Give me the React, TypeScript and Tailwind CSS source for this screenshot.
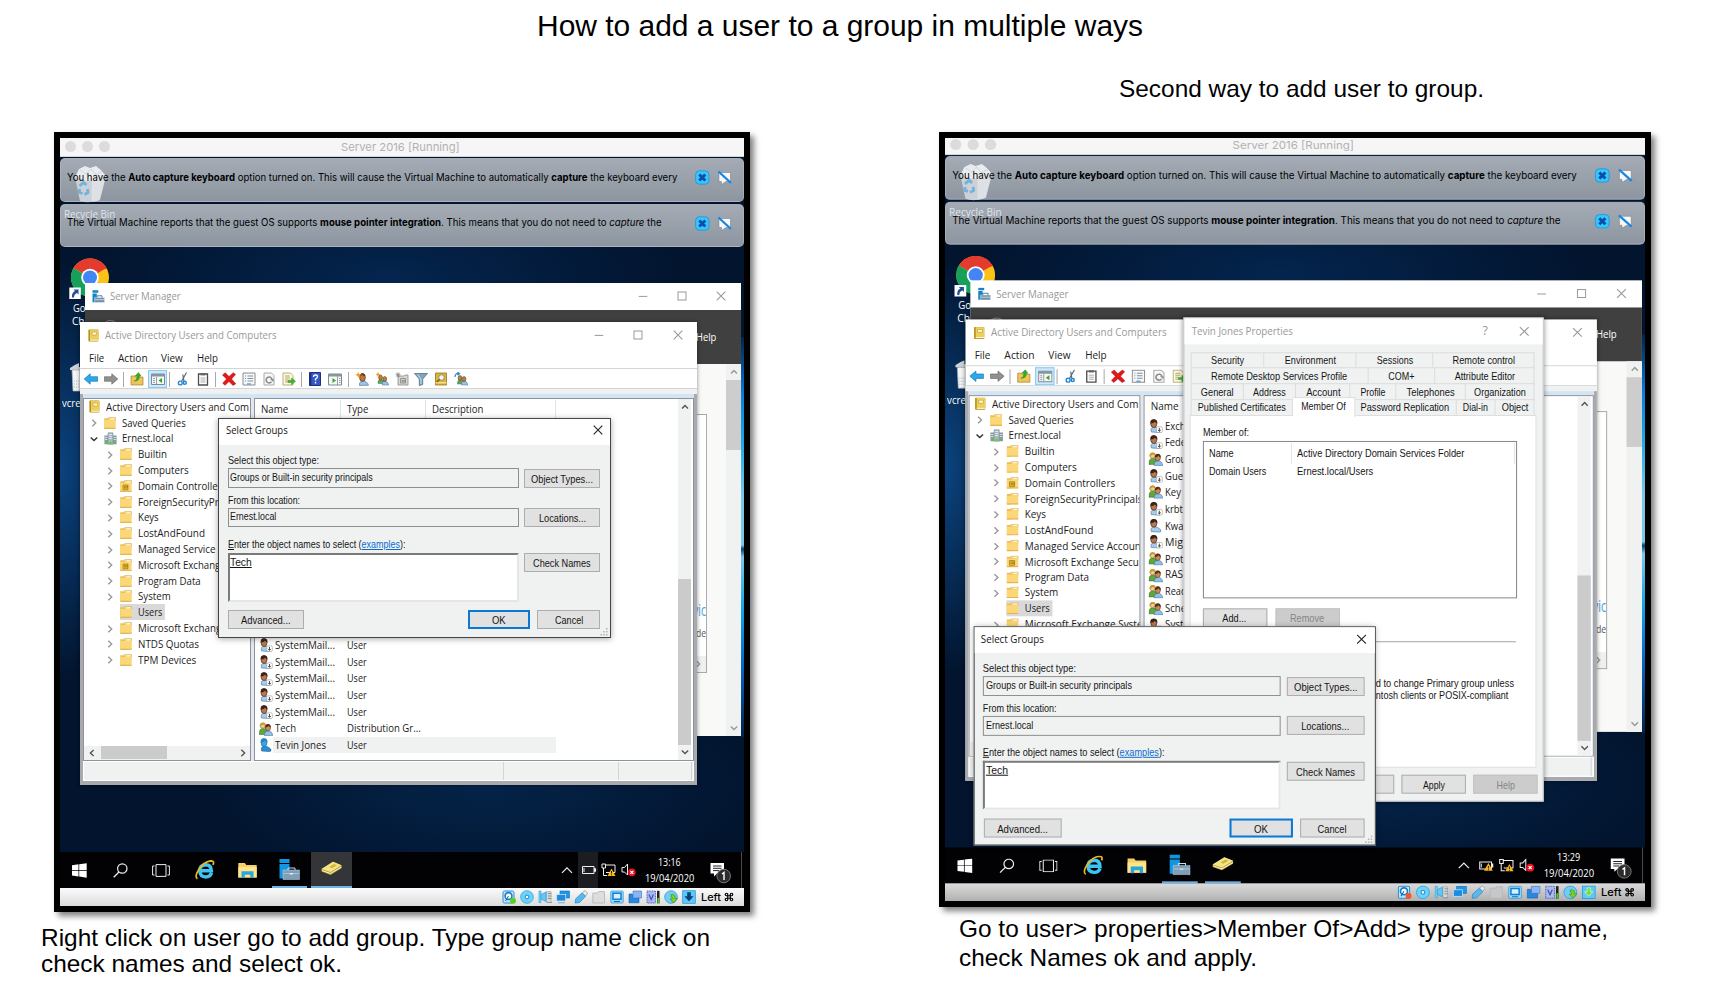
import { useLayoutEffect, useRef, type ReactNode } from "react";

/* Squeezes or stretches one line of text to the width given by its class. */
function Fit({ className = "", children }: { className?: string; children: ReactNode }) {
  const outer = useRef<HTMLSpanElement>(null);
  const inner = useRef<HTMLSpanElement>(null);
  useLayoutEffect(() => {
    const o = outer.current;
    const i = inner.current;
    if (!o || !i) return;
    i.style.transform = "none";
    const ratio = o.getBoundingClientRect().width / i.getBoundingClientRect().width;
    i.style.transform = `scaleX(${ratio})`;
  }, [children]);
  return (
    <span ref={outer} className={`block shrink-0 whitespace-nowrap ${className}`}>
      <span ref={inner} className="inline-block origin-left whitespace-nowrap">
        {children}
      </span>
    </span>
  );
}

const segoe = "font-['Open_Sans','Noto_Sans',sans-serif] text-[10.5px] leading-[14px]";
const shell = "font-['Liberation_Sans',Arial,sans-serif] text-[10.5px] leading-[14px]";

/* ---------- window glyphs ---------- */
const MinGlyph = () => (
  <svg className="h-[10px] w-[10px]" viewBox="0 0 10 10"><path d="M.7 5.4h8.6" stroke="#999" strokeWidth="1" /></svg>
);
const MaxGlyph = () => (
  <svg className="h-[10px] w-[10px]" viewBox="0 0 10 10"><rect x="1" y="1" width="8" height="8" fill="none" stroke="#999" /></svg>
);
const CloseGlyph = ({ dark = false }: { dark?: boolean }) => (
  <svg className="h-[10px] w-[10px]" viewBox="0 0 10 10"><path d="M.7.7l8.6 8.6M9.3.7L.7 9.3" stroke={dark ? "#222" : "#999"} strokeWidth="1.1" /></svg>
);
function Chevron({ d, color = "#555" }: { d: "up" | "down" | "left" | "right"; color?: string }) {
  const p = {
    up: "M1 5.6L4 2.4l3 3.2",
    down: "M.8 2.4L4 5.6l3.2-3.2",
    left: "M5.6 1L2.4 4l3.2 3",
    right: "M2.3.7L5.7 4 2.3 7.3",
  }[d];
  return <svg className="h-[8px] w-[8px]" viewBox="0 0 8 8"><path d={p} fill="none" stroke={color} strokeWidth="1.4" /></svg>;
}

/* ---------- small icons ---------- */
const BookIcon = () => (
  <svg className="h-[13px] w-[11px]" viewBox="0 0 11 13">
    <rect x=".4" y=".6" width="10" height="12" rx=".8" fill="#b98f1c" />
    <rect x="2" y=".8" width="8.4" height="9.6" fill="#ecd05c" />
    <rect x="2" y="10.4" width="8.4" height="1.4" fill="#fff5cf" />
    <rect x="4" y="3" width="4.6" height="3" fill="#fdf6cc" stroke="#b78d1a" strokeWidth=".5" />
  </svg>
);
const ServerIcon = () => (
  <svg className="h-[13px] w-[13px]" viewBox="0 0 13 13">
    <path d="M.5.3h5.8v2.5H.5zM.5 3.6h4.3v8.6H.5z" fill="#1583c9" />
    <path d="M2.6 7.5h10v5h-10z" fill="#6d93ac" stroke="#fff" strokeWidth=".4" />
    <path d="M5 7.5V5.8h5v1.7" fill="none" stroke="#5c8199" />
    <path d="M3 9.700h9.500" stroke="#e5eef3" strokeWidth=".7" />
  </svg>
);
const FolderIcon = ({ ou = false }: { ou?: boolean }) => (
  <svg className="h-[12px] w-[12px] shrink-0" viewBox="0 0 12 12">
    <path d="M.3 1.300h3.700l1 1.200V11.700H.3z" fill="#eebd53" />
    <path d="M4.500.5h7v3h-7z" fill="#f8dc8d" stroke="#d8a73f" strokeWidth=".5" />
    <path d="M.3 3h11.400v8.700H.3z" fill="#fbd778" />
    <path d="M.3 10.800h11.400v.9H.3z" fill="#dfa63f" />
    <path d="M7 1.800h3.300" stroke="#fff" strokeWidth=".8" />
    {ou && <path d="M3 5h5v4.800H3zM4.500 6.500h3v1.500h-3z" fill="#e8c030" stroke="#9b7410" strokeWidth=".7" />}
  </svg>
);
const DomainIcon = () => (
  <svg className="h-[13px] w-[13px] shrink-0" viewBox="0 0 13 13">
    <path d="M.4 3.500h3.800v8.800H.4zM8.800 3.500h3.800v8.800H8.800z" fill="#8b9aa5" />
    <path d="M4 .8h5v11.500H4z" fill="#a9b7c0" stroke="#73838f" strokeWidth=".5" />
    <path d="M4.800 2.500h3.400M4.800 4.500h3.400M4.800 6.500h3.400M1 5.500h2.500M1 7.500h2.500M9.500 5.500h2.500M9.500 7.500h2.500" stroke="#f2f6f8" strokeWidth=".7" />
    <path d="M1.500 10.500h2M5.500 11h2M9.800 10.500h2" stroke="#48d31d" strokeWidth="1.800" />
  </svg>
);
type Kind = "off" | "user" | "group" | "blue";
function PersonIcon({ kind }: { kind: Kind }) {
  if (kind === "group")
    return (
      <svg className="h-[14px] w-[14px] shrink-0" viewBox="0 0 14 14">
        <path d="M.2 11.500Q.2 6.500 4 6.500t3.500 3.500l-.5 2.500H.2z" fill="#5ca83b" stroke="#33691e" strokeWidth=".5" />
        <circle cx="3.800" cy="3.700" r="2.600" fill="#f0cf92" stroke="#8a6a1d" strokeWidth=".6" />
        <path d="M.9 4Q1.200.6 4 .6t2.700 2.500q-2 .3-2.800-.6Q3.200 3.800.9 4z" fill="#c99c24" />
        <path d="M5.300 13.500Q5 9.300 9 9t4.800 4.600z" fill="#8fc0e8" stroke="#33648f" strokeWidth=".5" />
        <ellipse cx="8.900" cy="5.800" rx="2.600" ry="3.200" fill="#c98a5a" stroke="#4a2a18" strokeWidth=".5" />
        <path d="M6.100 5.600Q6 1.900 9 1.900t2.800 3.700q-1.500-.3-2-1.800Q8.800 5.500 6.100 5.600z" fill="#54301c" />
      </svg>
    );
  const b = kind === "blue";
  return (
    <svg className="h-[14px] w-[14px] shrink-0" viewBox="0 0 14 14">
      <path d="M2.600 13Q1.500 8.600 4.700 8.300q4.500-.5 7 2.700 1 2.200-.8 2.500z" fill={b ? "#2a8fd0" : "#a6cdec"} stroke={b ? "#135c92" : "#3f6e97"} strokeWidth=".6" />
      <ellipse cx="5" cy="4.600" rx="3" ry="3.900" fill={b ? "#3fa4df" : "#b9774b"} stroke={b ? "#1565a0" : "#3b2317"} strokeWidth=".6" />
      <path d="M1.700 4.500Q1.300.3 5 .3t3.500 4.200Q6.800 4 6 2.800 5 4.600 1.700 4.500z" fill={b ? "#2585c4" : "#3c2418"} />
      {kind === "off" && (
        <g>
          <rect x="7.600" y="7.800" width="5.800" height="5.800" rx="1.500" fill="#fff" stroke="#888" strokeWidth=".5" />
          <path d="M10.500 9v3.200M9.100 10.900l1.400 1.400 1.400-1.400" fill="none" stroke="#222" strokeWidth=".8" />
        </g>
      )}
    </svg>
  );
}

/* ---------- toolbar ---------- */
const Sep = () => <span className="h-[15px] w-px bg-[#a9a9a9]" />;
const Ico = ({ children }: { children: ReactNode }) => <svg className="h-[14px] w-[14px]" viewBox="0 0 14 14">{children}</svg>;
const Head = ({ x, y, c }: { x: number; y: number; c: string }) => (
  <g>
    <path d={`M${x - 2.5} ${y + 6}q-.5-4 2.500-4t4 4z`} fill={c} stroke="#3f6e97" strokeWidth=".5" />
    <ellipse cx={x} cy={y} rx="1.900" ry="2.500" fill="#b9803e" stroke="#4a2e16" strokeWidth=".5" />
  </g>
);
const toolbar: { w: string; el: ReactNode }[] = [
  { w: "w-[20px]", el: <Ico><path d="M.2 7l6-5.200v3h7.500v4.400H6.200v3z" fill="#2fa8ea" stroke="#1578b8" strokeWidth=".7" /></Ico> },
  { w: "w-[19.5px]", el: <Ico><path d="M13.800 7l-6-5.200v3H.3v4.400h7.500v3z" fill="#919191" stroke="#6b6b6b" strokeWidth=".7" /></Ico> },
  { w: "w-[5.5px]", el: <Sep /> },
  { w: "w-[22px]", el: <Ico><path d="M1 4h4l1 1h7v8H1z" fill="#ecc55d" stroke="#ab812a" strokeWidth=".7" /><path d="M4 9q3 0 3-5H5l3.500-3.500L11 4H9.500Q9.500 9.500 4 9z" fill="#35ac27" stroke="#1b7a12" strokeWidth=".4" /></Ico> },
  { w: "w-[19.3px] h-[18.5px] bg-[#cce8fb] border border-[#8cc9f2]", el: <Ico><path d="M.5 2h13v10.500H.5z" fill="#f4f6f7" stroke="#7f8a92" /><path d="M.5 2h13v2.500H.5z" fill="#8795a0" /><path d="M2 6.500h2M2 8.500h2M2 10.500h2M5.500 5v7" stroke="#7f8a92" strokeWidth=".8" /><path d="M11 6v5L7.500 8.500z" fill="#34a825" /></Ico> },
  { w: "w-[3.5px]", el: <Sep /> },
  { w: "w-[24px]", el: <Ico><path d="M10.500.5L5.500 9.500M6.800 2.500L8 9.500" stroke="#596b7a" strokeWidth="1.200" /><circle cx="4.300" cy="11" r="1.900" fill="none" stroke="#2585d0" strokeWidth="1.400" /><circle cx="8.800" cy="10.800" r="1.500" fill="none" stroke="#2585d0" strokeWidth="1.400" /></Ico> },
  { w: "w-[17px]", el: <Ico><path d="M2.500 2h9v11h-9z" fill="#fff" stroke="#4d4d4d" strokeWidth="1.300" /><path d="M4.500 1h5v2.400h-5z" fill="#666" /><path d="M4.500 6h5M4.500 8h5M4.500 10h5" stroke="#888" strokeWidth=".7" /></Ico> },
  { w: "w-[7px]", el: <Sep /> },
  { w: "w-[21px]", el: <Ico><path d="M.5 3l2.800-2.300L7 4.500 11.300.7l2.200 1.800L9.500 7l4.300 4.700-2.800 1.700L7 9.500 3 13.300l-2.300-2.100L4.500 7z" fill="#e51818" stroke="#9e0c0c" strokeWidth=".5" /></Ico> },
  { w: "w-[19px]", el: <Ico><path d="M1 1h12v12H1z" fill="#f7f7f7" stroke="#8c8c8c" /><path d="M3 4h1M5.500 4H11M3 6.500h1M5.500 6.500H11M3 9h1M5.500 9H11" stroke="#7d93a5" /><path d="M5 12h4" stroke="#5aa8d8" strokeWidth="1.400" /></Ico> },
  { w: "w-[21px]", el: <Ico><path d="M2 1h7.500L12 3.500V13H2z" fill="#f7f7f7" stroke="#aaa" /><path d="M9.500 9.800A3 3 0 1 1 10 7" fill="none" stroke="#868686" strokeWidth="1.500" /><path d="M8 7h3.500V10z" fill="#868686" /></Ico> },
  { w: "w-[18.5px]", el: <Ico><path d="M1 1h7.500L11 3.500V13H1z" fill="#fffbe0" stroke="#a99a55" strokeWidth=".8" /><path d="M3 4h5M3 6h5M3 8h3M3 10h3" stroke="#8a804a" strokeWidth=".7" /><path d="M6 8.200h3.500V6l4 3.300-4 3.300v-2.200H6z" fill="#45b52d" stroke="#237a12" strokeWidth=".4" /></Ico> },
  { w: "w-[6.5px]", el: <Sep /> },
  { w: "w-[20.5px]", el: <Ico><path d="M1.500.5h11v13h-11z" fill="#3558c4" stroke="#1c2f7d" /><path d="M1.500.5h1.800v13H1.500z" fill="#1c2f7d" /><path d="M5.500 5q0-2 2-2t2 1.800Q9.500 6 7.500 7v1.500M7.500 9.800v1.700" fill="none" stroke="#fff" strokeWidth="1.300" /></Ico> },
  { w: "w-[19.5px]", el: <Ico><path d="M.5 2h13v11H.5z" fill="#f6f7f7" stroke="#7f8a92" /><path d="M.5 2h13v2.500H.5z" fill="#8795a0" /><path d="M9.500 4.500v8.500M11 6.500h1.500M11 8.500h1.500M11 10.500h1.500" stroke="#7f8a92" strokeWidth=".8" /><path d="M4.500 6v5L8 8.500z" fill="#34a825" /></Ico> },
  { w: "w-[6.5px]", el: <Sep /> },
  { w: "w-[21px]", el: <Ico><path d="M4.500 13.500q-.5-4.500 3.500-4.500t5.500 4.200z" fill="#9cc4e6" stroke="#3f6e97" strokeWidth=".6" /><ellipse cx="7.500" cy="5.500" rx="2.900" ry="3.900" fill="#b9773e" stroke="#4a2e16" strokeWidth=".6" /><path d="M4.600 4Q5 1.300 7.500 1.300t2.900 3Q8 4.500 7 3z" fill="#6b4322" /><path d="M3.200-.2l.9 2.200 2.200.8-2.200.9-.9 2.200-.8-2.200-2.200-.9L2.400 2z" fill="#f49b13" /></Ico> },
  { w: "w-[19.5px]", el: <Ico><Head x={5.5} y={5.500} c="#64ab43" /><Head x={9.700} y={7} c="#9cc4e6" /><path d="M3 0l.8 1.700 1.700.8-1.700.8L3 5l-.8-1.700L.5 2.500l1.700-.8z" fill="#f49b13" /></Ico> },
  { w: "w-[20px]", el: <Ico><path d="M3 4h6l1-1h3v10H3z" fill="#d6d6d2" stroke="#8c8c88" strokeWidth=".8" /><path d="M5.500 6.500h5v4.500h-5zM7 8.300h3v1.500H7z" fill="none" stroke="#85857f" strokeWidth=".8" /><path d="M3 .3v5M.5 2.800h5M1.200 1l3.600 3.600M4.800 1L1.200 4.600" stroke="#777" strokeWidth=".7" /></Ico> },
  { w: "w-[18.5px]", el: <Ico><path d="M.5 1.500h13L8.700 7v5.500l-3.400 1V7z" fill="#7fa5c0" stroke="#40657f" strokeWidth=".7" /><path d="M3.500 2.500L7 7v5" stroke="#d0e2ee" strokeWidth="1" fill="none" /></Ico> },
  { w: "w-[21px]", el: <Ico><path d="M1.500 1h11v12h-11z" fill="#dfb634" stroke="#967317" strokeWidth=".8" /><path d="M1.500 10.800h11" stroke="#fff0b5" /><circle cx="7.500" cy="5.500" r="2.800" fill="#eff7fb" stroke="#8b8b74" /><path d="M5.500 7.500L2.800 10" stroke="#775e1e" strokeWidth="1.500" /></Ico> },
  { w: "w-[19.5px]", el: <Ico><Head x={6} y={6} c="#64ab43" /><Head x={10} y={7} c="#9cc4e6" /><path d="M1 5Q1 1 5 1.500M3.500 0l2 1.700-2 1.500" fill="none" stroke="#2089cf" strokeWidth="1.200" /></Ico> },
];

/* ---------- Active Directory window ---------- */
type Node = { t: string; w: string; icon?: "ou" | "domain" | "book"; depth: 0 | 1 | 2; open?: boolean; sel?: boolean };
const tree: Node[] = [
  { t: "Active Directory Users and Com", w: "w-[143px]", icon: "book", depth: 0 },
  { t: "Saved Queries", w: "w-[63.7px]", depth: 1 },
  { t: "Ernest.local", w: "w-[51.3px]", icon: "domain", depth: 1, open: true },
  { t: "Builtin", w: "w-[29px]", depth: 2 },
  { t: "Computers", w: "w-[50.7px]", depth: 2 },
  { t: "Domain Controllers", w: "w-[88.3px]", icon: "ou", depth: 2 },
  { t: "ForeignSecurityPrincipals", w: "w-[115px]", depth: 2 },
  { t: "Keys", w: "w-[20.7px]", depth: 2 },
  { t: "LostAndFound", w: "w-[67px]", depth: 2 },
  { t: "Managed Service Accoun", w: "w-[113.5px]", depth: 2 },
  { t: "Microsoft Exchange Secu", w: "w-[111.4px]", icon: "ou", depth: 2 },
  { t: "Program Data", w: "w-[62.7px]", depth: 2 },
  { t: "System", w: "w-[32.7px]", depth: 2 },
  { t: "Users", w: "w-[24.3px]", depth: 2, sel: true },
  { t: "Microsoft Exchange Syste", w: "w-[115px]", depth: 2 },
  { t: "NTDS Quotas", w: "w-[61px]", depth: 2 },
  { t: "TPM Devices", w: "w-[58.3px]", depth: 2 },
];

function TreeRow({ n }: { n: Node }) {
  const pad = n.depth === 0 ? "pl-[5px]" : n.depth === 1 ? "pl-[5.5px]" : "pl-[22px]";
  return (
    <div className={`flex h-[15.8px] shrink-0 items-center ${pad}`}>
      {n.depth > 0 && (
        <span className="flex w-[14px] shrink-0 pt-px">{!n.sel && <Chevron d={n.open ? "down" : "right"} color={n.open ? "#333" : "#999"} />}</span>
      )}
      <span className={`flex h-full items-center pr-[3px] ${n.sel ? "bg-[#d9d9d9]" : ""}`}>
        <span className={`flex shrink-0 ${n.depth === 0 ? "w-[16.5px]" : "w-[18px]"}`}>
          {n.icon === "book" ? <BookIcon /> : n.icon === "domain" ? <DomainIcon /> : <FolderIcon ou={n.icon === "ou"} />}
        </span>
        <Fit className={n.w}>{n.t}</Fit>
      </span>
    </div>
  );
}

type Row = { t: string; w: string; kind: Kind; type?: string; tw?: string; sel?: boolean };
const upperRows: Row[] = [
  { t: "Exch", w: "w-[20px]", kind: "off" },
  { t: "Fede", w: "w-[20.5px]", kind: "off" },
  { t: "Grou", w: "w-[20.5px]", kind: "group" },
  { t: "Gue", w: "w-[17.7px]", kind: "off" },
  { t: "Key", w: "w-[15.5px]", kind: "group" },
  { t: "krbt", w: "w-[17.5px]", kind: "off" },
  { t: "Kwa", w: "w-[18px]", kind: "user" },
  { t: "Mig", w: "w-[17.5px]", kind: "off" },
  { t: "Prot", w: "w-[18px]", kind: "group" },
  { t: "RAS", w: "w-[17.7px]", kind: "group" },
  { t: "Read", w: "w-[21px]", kind: "group" },
  { t: "Sche", w: "w-[20.5px]", kind: "group" },
  { t: "Syst", w: "w-[18px]", kind: "off" },
];
const mail: Row = { t: "SystemMail...", w: "w-[60px]", kind: "off", type: "User", tw: "w-[19.7px]" };
const lowerRows: Row[] = [
  mail, mail, mail, mail, mail,
  { t: "Tech", w: "w-[21px]", kind: "group", type: "Distribution Gr...", tw: "w-[73.7px]" },
  { t: "Tevin Jones", w: "w-[51px]", kind: "blue", type: "User", tw: "w-[19.7px]", sel: true },
];

function Directory({ second }: { second: boolean }) {
  return (
    <section className={`absolute left-[20px] top-[184px] flex h-[463.3px] w-[617px] flex-col bg-white text-[#1b1b1b] shadow-[0_0_4px_rgba(0,0,0,0.45)] ${segoe}`}>
      <header className="flex h-[26px] shrink-0 items-center pl-[8px] text-[#999]">
        <span className="w-[16.7px]"><BookIcon /></span>
        <Fit className="w-[171.6px]">Active Directory Users and Computers</Fit>
        <div className="ml-auto mr-[14.5px] flex gap-[29.3px]"><MinGlyph /><MaxGlyph /><CloseGlyph /></div>
      </header>
      <nav className="flex h-[20px] shrink-0 items-center pb-px pl-[8.7px]">
        <Fit className="mr-[13.7px] w-[15.3px]">File</Fit>
        <Fit className="mr-[13.7px] w-[29.6px]">Action</Fit>
        <Fit className="mr-[14px] w-[21.7px]">View</Fit>
        <Fit className="w-[21px]">Help</Fit>
      </nav>
      <div className="flex h-[21px] shrink-0 items-center border-y border-[#d2d5d7] pl-px pt-px">
        {toolbar.map((b, i) => (
          <span key={i} className={`flex shrink-0 items-center justify-center ${b.w}`}>{b.el}</span>
        ))}
      </div>
      <div className="h-[5px] shrink-0 bg-[#f0f2f2]" />
      <div className="flex min-h-0 flex-1 flex-col border-x-[3.5px] border-b-4 border-[#a8aaad]">
        <div className="h-[4px] shrink-0 bg-[#d3e4f2]" />
        <div className="flex h-[363px] shrink-0 gap-[2.5px] bg-[#e4e8ec]">
          <div className="flex w-[168px] shrink-0 flex-col overflow-hidden border border-[#8c929e] bg-white">
            {tree.map((n) => <TreeRow key={n.t + n.w} n={n} />)}
            <div className="mt-auto flex h-[14.5px] shrink-0 items-center justify-between bg-[#f0f1f1] px-[3.5px]">
              <Chevron d="left" />
              <span className="-ml-[67px] h-[13px] w-[66px] bg-[#cbcbcb]" />
              <Chevron d="right" />
            </div>
          </div>
          <div className="flex min-w-0 flex-1 border border-[#8c929e] bg-white">
            <div className="min-w-0 flex-1">
              <div className="flex h-[21.5px] items-center">
                <span className="flex h-[19px] w-[86.5px] items-center border-r border-[#e3e3e3] pb-[2px] pl-[6px]"><Fit className="w-[27.3px]">Name</Fit></span>
                <span className="flex h-[19px] w-[85px] items-center border-r border-[#e3e3e3] pb-[2px] pl-[5.7px]"><Fit className="w-[21.3px]">Type</Fit></span>
                <span className="flex h-[19px] w-[129.5px] items-center border-r border-[#e3e3e3] pb-[2px] pl-[6px]"><Fit className="w-[51.4px]">Description</Fit></span>
              </div>
              <div className={second ? "" : "pt-[216.4px]"}>
                {(second ? [...upperRows, ...lowerRows] : lowerRows).map((r, i) => (
                  <div key={i} className="flex h-[16.67px] w-[301.5px] items-center pl-[4.7px]">
                    <PersonIcon kind={r.kind} />
                    <span className={`flex h-full flex-1 items-center pb-[.5px] pl-[1.5px] ${r.sel ? "bg-[#f0f1f1]" : ""}`}>
                      <span className="w-[72.3px]"><Fit className={r.w}>{r.t}</Fit></span>
                      {r.type && <Fit className={r.tw}>{r.type}</Fit>}
                    </span>
                  </div>
                ))}
              </div>
            </div>
            <div className="mr-[2px] flex w-[13px] flex-col items-center justify-between bg-[#f0f1f1] py-[4px]">
              <Chevron d="up" />
              <span className="mb-[3px] mt-auto h-[166px] w-[13px] bg-[#cbcbcb]" />
              <Chevron d="down" />
            </div>
          </div>
        </div>
        <footer className="flex flex-1 items-stretch border border-white bg-[#f0f2f2] pr-[1px]">
          <span className="w-[420px] border-r border-[#d5d5d5]" />
          <span className="w-[114.5px] border-r border-[#d5d5d5]" />
          <span className="flex-1 border-r border-[#d5d5d5]" />
        </footer>
      </div>
    </section>
  );
}

/* ---------- Server Manager window ---------- */
function ServerManager() {
  return (
    <section className={`absolute left-[25px] top-[145px] flex h-[453px] w-[656px] flex-col bg-[#f9f9f8] ${segoe}`}>
      <header className="flex h-[27px] shrink-0 items-center bg-white pb-px pl-[7.3px] text-[#999]">
        <span className="w-[17.4px]"><ServerIcon /></span>
        <Fit className="w-[70.7px]">Server Manager</Fit>
        <div className="ml-auto mr-[15px] flex gap-[29.2px]"><MinGlyph /><MaxGlyph /><CloseGlyph /></div>
      </header>
      <div className="flex h-[54.3px] shrink-0 justify-end bg-[#404040] pr-[24.5px] pt-[20px] text-white">
        <span className="-mt-[10px] ml-[17px] mr-auto h-[17px] w-[17px] rounded-full border border-[#8a8a8a]" />
        <Fit className="w-[20.4px]">Help</Fit>
      </div>
      <div className="flex min-h-0 flex-1">
        <div className="flex-1 pr-[19px] pt-[50px]">
          <div className="flex h-[258.5px] flex-col items-end overflow-hidden border border-[#aaa] bg-white">
            <Fit className="mt-[184.5px] w-[13px] text-[15.5px] leading-[20px] text-[#4b9bd6]">vic</Fit>
            <Fit className="mt-[6.500px] w-[10px] text-[#555]">de</Fit>
            <span className="mt-auto flex h-[16px] w-full items-center justify-end bg-[#f0f0f0] pr-[4px]"><Chevron d="right" color="#999" /></span>
          </div>
        </div>
        <div className="flex w-[15px] flex-col items-center bg-[#f0f1f1] py-[4px]">
          <Chevron d="up" color="#999" />
          <span className="mt-[4px] h-[70px] w-[15px] bg-[#cdcdcd]" />
          <span className="mt-auto flex"><Chevron d="down" color="#999" /></span>
        </div>
      </div>
    </section>
  );
}

/* ---------- dialogs ---------- */
function Button({ box, text, children, primary, off }: { box: string; text: string; children: ReactNode; primary?: boolean; off?: boolean }) {
  const look = primary ? "border-2 border-[#0a78d7] bg-[#e1e1e1]" : off ? "bg-[#cccccc] text-[#858585] border border-[#c2c2c2]" : "border border-[#adadad] bg-[#e1e1e1]";
  return (
    <span className={`flex h-[19px] shrink-0 items-center justify-center pt-px ${look} ${box}`}>
      <Fit className={text}>{children}</Fit>
    </span>
  );
}

function SelectGroups({ place }: { place: string }) {
  return (
    <section className={`absolute flex h-[219.5px] w-[393.3px] flex-col border border-[#454545] bg-[#f0f2f2] text-[#151515] shadow-[0_1px_6px_rgba(0,0,0,0.35)] ${shell} ${place}`}>
      <header className={`flex h-[25.5px] shrink-0 items-center justify-between bg-white pb-[3px] pl-[6.7px] pr-[7.5px] ${segoe}`}>
        <Fit className="w-[61.7px]">Select Groups</Fit>
        <CloseGlyph dark />
      </header>
      <div className="flex flex-col pl-[8.7px] pr-[10px]">
        <Fit className="mt-[8.5px] w-[91px]">Select this object type:</Fit>
        <div className="mt-[1px] flex gap-[5.7px]">
          <span className="flex h-[20px] w-[291.3px] items-center border border-[#8e8e8e] pb-[2px] pl-[1.5px]"><Fit className="w-[142.7px]">Groups or Built-in security principals</Fit></span>
          <Button box="mt-[.5px] w-[76px]" text="w-[62px]">Object Types...</Button>
        </div>
        <Fit className="mt-[4.5px] w-[72px]">From this location:</Fit>
        <div className="mt-[1px] flex gap-[5.7px]">
          <span className="flex h-[19.7px] w-[291.3px] items-center border border-[#8e8e8e] pb-[2px] pl-[1.8px]"><Fit className="w-[46.3px]">Ernest.local</Fit></span>
          <Button box="mt-[.5px] w-[76px]" text="w-[47px]">Locations...</Button>
        </div>
        <Fit className="mt-[9.5px] w-[177.5px]">
          <u>E</u>nter the object names to select (<span className="text-[#0b6bd0] underline">examples</span>):
        </Fit>
        <div className="mt-[2px] flex gap-[5.7px]">
          <span className="h-[49px] w-[291.3px] border-2 border-b-[#e6e6e6] border-l-[#7a7a7a] border-r-[#e6e6e6] border-t-[#7a7a7a] bg-white pl-[.5px]">
            <Fit className="w-[21.7px]"><u>Tech</u></Fit>
          </span>
          <Button box="mt-[.5px] w-[76px]" text="w-[57.7px]">Check Names</Button>
        </div>
        <div className="mt-[8.5px] flex pl-[.5px]">
          <Button box="w-[76px] mr-auto" text="w-[49.7px]">Advanced...</Button>
          <Button box="w-[62.3px] mr-[7px]" text="w-[13.7px]" primary>OK</Button>
          <Button box="w-[63px]" text="w-[28.3px]">Cancel</Button>
        </div>
      </div>
      <svg className="absolute bottom-[1px] right-[2px] h-[8px] w-[8px]" viewBox="0 0 8 8">
        <path d="M6 0h1.600v1.600H6zM3.200 3h1.600v1.600H3.200zM6 3h1.600v1.600H6zM.4 6H2v1.600H.4zM3.200 6h1.600v1.600H3.200zM6 6h1.600v1.600H6z" fill="#b5b5b5" />
      </svg>
    </section>
  );
}

type Tab = { t: string; box: string; text: string; on?: boolean };
const tabs: Tab[][] = [
  [
    { t: "Security", box: "w-[71.3px]", text: "w-[32.3px]" },
    { t: "Environment", box: "w-[90.5px]", text: "w-[50px]" },
    { t: "Sessions", box: "w-[75px]", text: "w-[35.5px]" },
    { t: "Remote control", box: "flex-1", text: "w-[61px]" },
  ],
  [
    { t: "Remote Desktop Services Profile", box: "w-[172.9px]", text: "w-[133px]" },
    { t: "COM+", box: "w-[65.5px]", text: "w-[25.7px]" },
    { t: "Attribute Editor", box: "flex-1", text: "w-[59px]" },
  ],
  [
    { t: "General", box: "w-[51.1px]", text: "w-[32px]" },
    { t: "Address", box: "w-[51.5px]", text: "w-[32px]" },
    { t: "Account", box: "w-[53.1px]", text: "w-[33.5px]" },
    { t: "Profile", box: "w-[44.6px]", text: "w-[24.4px]" },
    { t: "Telephones", box: "w-[67.7px]", text: "w-[47px]" },
    { t: "Organization", box: "flex-1", text: "w-[50.5px]" },
  ],
  [
    { t: "Published Certificates", box: "w-[99px]", text: "w-[86px]" },
    { t: "Member Of", box: "w-[60.9px]", text: "w-[43.6px]", on: true },
    { t: "Password Replication", box: "w-[99px]", text: "w-[86.6px]" },
    { t: "Dial-in", box: "w-[38.8px]", text: "w-[24.4px]" },
    { t: "Object", box: "flex-1", text: "w-[26px]" },
  ],
];

function Properties() {
  return (
    <section className={`absolute left-[232.5px] top-[182.3px] flex h-[485.8px] w-[352.8px] flex-col border border-[#c3c5c7] bg-[#f0f2f2] text-[#151515] shadow-[0_0_5px_rgba(0,0,0,0.45)] ${shell}`}>
      <header className={`flex h-[25.5px] shrink-0 items-center bg-white pl-[7px] text-[#999] ${segoe}`}>
        <Fit className="w-[99px]">Tevin Jones Properties</Fit>
        <span className="ml-auto mr-[30.5px] text-[12px]">?</span>
        <span className="mr-[13.5px] pb-px"><CloseGlyph /></span>
      </header>
      <div className="mt-[7.8px] flex flex-col pl-[6.2px] pr-[8px]">
        {tabs.map((row, i) => (
          <div key={i} className="flex h-[15.75px] border-l border-[#dcdcdc]">
            {row.map((t) => (
              <span
                key={t.t}
                className={`flex items-center justify-center border-r border-t border-[#dcdcdc] ${t.box} ${t.on ? "relative -mb-[2px] -mt-[2px] bg-white pb-[3px]" : "pt-[.5px]"}`}
              >
                <Fit className={t.text}>{t.t}</Fit>
              </span>
            ))}
          </div>
        ))}
      </div>
      <div className="ml-[5px] mr-[6.5px] flex h-[354.5px] shrink-0 flex-col border border-[#dcdcdc] bg-white pl-[12px] pt-[9px]">
        <Fit className="w-[45px]">Member of:</Fit>
        <div className="mt-[2px] flex h-[158.7px] w-[307px] shrink-0 flex-col border border-[#828790] pl-[5.5px]">
          <div className="flex h-[22px] items-center pt-px">
            <span className="flex h-full w-[80.5px] items-center border-r border-[#e3e3e3]"><Fit className="w-[24px]">Name</Fit></span>
            <span className="flex h-full w-[218px] items-center border-r border-[#e3e3e3] pl-[5.5px]"><Fit className="w-[163.5px]">Active Directory Domain Services Folder</Fit></span>
          </div>
          <div className="flex h-[15px] items-center">
            <span className="w-[86px]"><Fit className="w-[56px]">Domain Users</Fit></span>
            <Fit className="w-[74.5px]">Ernest.local/Users</Fit>
          </div>
        </div>
        <div className="mt-[10px] flex gap-[8px]">
          <Button box="w-[63px]" text="w-[23.5px]">Add...</Button>
          <Button box="w-[63px]" text="w-[33.6px]" off>Remove</Button>
        </div>
        <div className="mt-[13.5px] h-px w-[306px] shrink-0 bg-[#a5a5a5]" />
        <div className="mt-[36.5px] flex flex-col pl-[169.5px] leading-[11.4px]">
          <Fit className="w-[135px]">d to change Primary group unless</Fit>
          <Fit className="w-[129.5px]">ntosh clients or POSIX-compliant</Fit>
        </div>
      </div>
      <div className="mr-[5px] mt-[7px] flex justify-end gap-[6.7px]">
        <Button box="w-[63px]" text="w-[28.3px]">Cancel</Button>
        <Button box="w-[63.5px]" text="w-[21.5px]">Apply</Button>
        <Button box="w-[63.5px]" text="w-[18px]" off>Help</Button>
      </div>
    </section>
  );
}

/* ---------- notifications ---------- */
const NoteIcons = () => (
  <svg className="ml-auto h-[15px] w-[38px] shrink-0" viewBox="0 0 38 15">
    <rect x=".6" y=".8" width="13.400" height="13.400" rx="3.800" fill="#37c5fb" stroke="#128fd6" strokeWidth=".7" />
    <path d="M4.300 4.500l6 6M10.300 4.500l-6 6" stroke="#0b4ea8" strokeWidth="2.900" />
    <path d="M24 2.500h11.500v9H31l-4.500 3v-3H24z" fill="#f7f8fa" stroke="#6d757e" strokeWidth=".5" />
    <path d="M23.500 1.500l12.500 11.500" stroke="#1a86e0" strokeWidth="2.300" />
  </svg>
);
const noteBox = "relative flex items-center rounded-[5px] border border-[#b2b9c1]/60 bg-linear-to-b from-[#a4abb5] to-[#8d96a0] pl-[6px] pr-[10px] pb-[4px]";

const RecycleBin = () => (
  <svg className="absolute left-[13px] top-[6px] h-[38px] w-[33px]" viewBox="0 0 33 38">
    <path d="M1 12l5 24q9 3 20-1l6-24z" fill="#ccd1d7" />
    <path d="M18 14h13l-5.500 21q-4 1.500-8 1.600z" fill="#dde1e5" />
    <path d="M1 12L5 4l6-3 5 2 6-2 5 4 5 6-10 4-9 1z" fill="#e9ecef" />
    <path d="M6 5l6 4 5-5M17 4l5 6 6-4" fill="none" stroke="#c9ced4" strokeWidth=".8" />
    <path d="M5.500 21l4-3.500 3 2.500M13.500 24l.5 3.500-3.500 2M8.500 28.500l-3-1v-3.500" fill="none" stroke="#72b3dd" strokeWidth="2.800" />
  </svg>
);

/* ---------- taskbar ---------- */
const NetIcon = () => (
  <svg className="h-[14px] w-[15px]" viewBox="0 0 15 14">
    <path d="M4 2h10v7.500H5M1 1h3.500v4H1zM2.500 5v7.500H6M9 9.500v3" fill="none" stroke="#eee" />
    <path d="M10.500 5.500l4 7.500h-8z" fill="#fdb913" />
    <path d="M10.500 8v2.500M10.500 11.300v1" stroke="#222" strokeWidth="1" />
  </svg>
);

function Taskbar({ second }: { second: boolean }) {
  return (
    <div className={`flex h-[35.5px] shrink-0 items-center bg-[#020204] text-white ${segoe}`}>
      <svg className="ml-[11.5px] h-[15px] w-[15px]" viewBox="0 0 15 15"><path d="M0 2.200l6.500-.9V7H0zM7.200 1.200L14.700.2V7H7.200zM0 7.700h6.500v5.800L0 12.600zM7.200 7.700h7.500v7L7.200 13.600z" fill="#fff" /></svg>
      <svg className="ml-[26.5px] h-[15px] w-[15px]" viewBox="0 0 15 15"><circle cx="9.300" cy="5.500" r="4.700" fill="none" stroke="#eee" strokeWidth="1.200" /><path d="M6 9L.7 14.300" stroke="#eee" strokeWidth="1.300" /></svg>
      <svg className="ml-[24.2px] h-[13px] w-[18px]" viewBox="0 0 18 13"><path d="M4 .6h10v11.800H4zM2.500 2H.6v9h1.900M15.500 2h1.900v9h-1.900" fill="none" stroke="#eee" /></svg>
      <svg className="ml-[24.8px] h-[20px] w-[20px]" viewBox="0 0 20 20">
        <path d="M16.500 12.800Q15.300 17 10.800 17 5 16.800 4.800 11T10.700 4.800q5.600.2 5.700 6H6" fill="none" stroke="#3cc4f3" strokeWidth="3.400" />
        <path d="M2.500 18.800Q-.7 17 3.500 10 9 1.200 16 .8q3.700.2 2 4.200" fill="none" stroke="#f3b51e" strokeWidth="1.700" />
      </svg>
      <svg className="ml-[22.7px] h-[17px] w-[19px]" viewBox="0 0 19 17"><path d="M.3 1h6.500l1.500 2h10.400v12.500H.3z" fill="#f7cf62" /><path d="M.3 5h18.400v10.500H.3z" fill="#fde48e" /><path d="M3.500 15.800V9.200h12v6.600h-3.200v-3H6.800v3z" fill="#2aa6dd" /></svg>
      <span className="ml-[15px] flex h-full w-[35px] flex-col items-center justify-between">
        <svg className="mt-[7px] h-[21px] w-[21px]" viewBox="0 0 21 21"><path d="M.5 0h10v4H.5zM.5 5h10v14.500H.5z" fill="#1196e3" /><path d="M4 11h16.500v9.500H4z" fill="#7f9fb8" stroke="#c4d6e2" strokeWidth=".5" /><path d="M9 11V9h7v2" fill="none" stroke="#c8dae6" /><path d="M4.500 14.500h6M14 14.500h6" stroke="#b5cbd9" strokeWidth=".8" /><path d="M10.500 14h3.500v1.500h-3.500z" fill="#dce8ef" /></svg>
        <span className="h-[2px] w-[35px] bg-[#6db4ea]" />
      </span>
      <span className={`ml-[4px] flex h-full w-[41px] flex-col items-center justify-between ${second ? "" : "bg-[#333539]"}`}>
        <svg className="mt-[9px] h-[15px] w-[21px]" viewBox="0 0 21 15"><path d="M.5 8L12 .8l8.500 3.500v3L9.500 14 .5 10.500z" fill="#b79e35" /><path d="M.5 8L12 .8l8.500 3.500L9.500 11z" fill="#f3e48c" /><path d="M1 9.500l8.500 3 11-6.500" fill="none" stroke="#fff7c8" /><path d="M8 6l5-3 3 1.300-5 3z" fill="#d6b52e" /></svg>
        <span className={`h-[2px] bg-[#6db4ea] ${second ? "w-[35px]" : "w-[41px]"}`} />
      </span>
      <div className="ml-auto flex h-full items-center">
        <svg className="h-[8px] w-[12px]" viewBox="0 0 12 8"><path d="M1 6.800L6 1.800l5 5" fill="none" stroke="#eee" strokeWidth="1.200" /></svg>
        <span className={`ml-[5px] flex h-full w-[20px] items-center justify-center ${second ? "" : "bg-[#1b1d20]"}`}>
          <svg className="h-[12px] w-[15px]" viewBox="0 0 15 12">
            <path d="M1.500 2.500h11.500v7H1.500zM13.500 4.500h1v3h-1z" fill="none" stroke="#eee" /><path d="M3 4v4" stroke="#eee" />
            {second && <path d="M10 3.500l4.300 8H5.700z" fill="#fdb913" />}
            {second && <path d="M10 6.500V9M10 9.800v1" stroke="#222" />}
          </svg>
        </span>
        <span className="ml-[3px]"><NetIcon /></span>
        <svg className="ml-[5px] h-[14px] w-[15px]" viewBox="0 0 15 14"><path d="M1 4.500h2.500L6.500 1v11L3.500 9H1z" fill="none" stroke="#eee" /><circle cx="10.800" cy="9.300" r="3.900" fill="#e81123" /><path d="M9.300 7.800l3 3M12.300 7.800l-3 3" stroke="#fff" strokeWidth="1.200" /></svg>
        <span className="ml-[8px] flex w-[50px] flex-col items-center gap-[1.7px]">
          <Fit className="w-[22.7px]">{second ? "13:29" : "13:16"}</Fit>
          <Fit className="w-[49.3px]">19/04/2020</Fit>
        </span>
        <svg className="ml-[15.7px] mt-[5px] h-[22px] w-[22px]" viewBox="0 0 22 22">
          <path d="M.5 1h13.500v10.500H7L4 14.500v-3H.5z" fill="#fff" /><path d="M3 4h8.500M3 6.300h8.500M3 8.600h6" stroke="#222" />
          <circle cx="13.700" cy="14" r="6.800" fill="#2b2b2b" stroke="#8a8a8a" strokeWidth=".8" /><path d="M12 12l2-1.500V18" fill="none" stroke="#fff" strokeWidth="1.400" />
        </svg>
        <span className="ml-[9px] mr-[2px] h-full w-px bg-[#4a4a4a]" />
      </div>
    </div>
  );
}

/* ---------- machine status bar ---------- */
function StatusBar({ second }: { second: boolean }) {
  const icons: ReactNode[] = [
    <><rect x="1" y="1" width="11" height="12" rx="1.500" fill="#bfe6fb" stroke="#2c8fd1" /><circle cx="6.500" cy="6" r="3.400" fill="#fff" stroke="#1c7ec6" strokeWidth="1.600" /><path d="M6.500 6L3.500 11" stroke="#1565a8" /><circle cx="11" cy="10.800" r="3" fill={second ? "#f4592b" : "#5bd022"} /></>,
    <><circle cx="7" cy="7" r="6.300" fill="#6cd3fb" stroke="#27a3e0" strokeWidth=".8" /><circle cx="7" cy="7" r="1.900" fill="#fff" stroke="#1887c9" /></>,
    <><path d="M8.500 1.500h4.500v11H8.500z" fill="#d5d8db" stroke="#9ea4aa" strokeWidth=".6" /><path d="M10 3.500h3.500M10 6h3.500M10 8.500h3.500M9 12.500h5" stroke="#8f959b" /><path d="M1 1h2v11.500H1z" fill="#85d3f6" stroke="#259dd8" strokeWidth=".6" /><path d="M3 4.500L8 2v9.500L3 9z" fill="#69c8f3" stroke="#259dd8" strokeWidth=".7" /></>,
    <><rect x="4" y="1" width="9.500" height="7" fill="#2196e8" stroke="#0f6db5" strokeWidth=".6" /><rect x=".7" y="4.500" width="9" height="6.500" fill="#1f8be0" stroke="#cfe8fa" strokeWidth=".7" /><path d="M2 12.700h7" stroke="#9fb6c8" strokeWidth="1.300" /></>,
    <><path d="M1 13l.8-4.300L8 3l3.500 3.500-6 6z" fill="#5ab8ef" stroke="#1e86c9" strokeWidth=".7" /><path d="M8.300 2.800L11 .5 13.700 3.200 11.500 6z" fill="#e9eef2" stroke="#7d8b96" strokeWidth=".7" /></>,
    <path d="M.8 3h5l1-1.500h5.700V13H.8z" fill={second ? "#c6c7c8" : "#dcdddd"} stroke="#b3b4b5" strokeWidth=".8" />,
    <><rect x=".8" y="1" width="12.400" height="12" rx="1" fill="#9adaf9" stroke="#2491d6" strokeWidth=".7" /><rect x="3" y="3.200" width="8" height="6" fill="#d9f1fd" stroke="#0f7fd8" strokeWidth="1.500" /><path d="M4 11.500h6" stroke="#0f6fbf" /></>,
    <><path d="M1 4h3l1 1h6v7.800H1z" fill="#2689dd" stroke="#125da6" strokeWidth=".6" /><path d="M5 1h8.500v7H5z" fill="#8bb5f2" stroke="#3d6fc4" strokeWidth=".6" /></>,
    <><rect x="1" y="1" width="8.500" height="12" fill="#aab8ef" stroke="#5164b8" strokeDasharray="1 .7" /><path d="M3 4.500l2.200 5 2.200-5" fill="none" stroke="#4052ac" strokeWidth="1.200" /><rect x="11" y=".8" width="2.500" height="12.500" fill="#222" /><path d="M12.300 8v5" stroke="#49d31d" strokeWidth="1.800" /></>,
    <><circle cx="7" cy="7" r="6.300" fill="#6fcdf6" stroke="#2294d2" strokeWidth=".7" /><path d="M7 4.500Q12 4 11 8.500h2.500L9.500 13 6 9h2.200Q8.500 7 7 6.800z" fill="#7bd02a" stroke="#3c8d0f" strokeWidth=".6" /></>,
    <><rect x=".7" y=".7" width="12.600" height="12.600" fill="#5dc9f8" stroke="#1c8fd4" strokeWidth=".7" /><path d="M5.500 2.500h3V6.500H11L7 11 3 6.500h2.500z" fill={second ? "#7ddc2e" : "#0e3f75"} stroke={second ? "#e7ffd8" : "#0e3f75"} strokeWidth=".6" /></>,
  ];
  return (
    <div className={`flex h-[18.2px] shrink-0 items-center bg-linear-to-b pl-[442.2px] ${second ? "from-[#dcdcdc] to-[#b0b0b0]" : "from-[#fbfbfb] to-[#dcdcdc]"}`}>
      {icons.map((ic, i) => (
        <span key={i} className="flex w-[18px] shrink-0"><svg className="h-[14px] w-[14px]" viewBox="0 0 14 14">{ic}</svg></span>
      ))}
      <span className="ml-[1.2px] flex items-center gap-[3px]">
        <Fit className="w-[20px] font-['Inter','Open_Sans',sans-serif] text-[11px] font-medium leading-[14px] text-black">Left</Fit>
        <svg className="h-[10px] w-[10px]" viewBox="0 0 24 24"><path d="M15 6v12a3 3 0 1 0 3-3H6a3 3 0 1 0 3 3V6a3 3 0 1 0-3 3h12a3 3 0 1 0-3-3" fill="none" stroke="#000" strokeWidth="2.800" /></svg>
      </span>
    </div>
  );
}

/* ---------- one virtual machine screen ---------- */
function Screen({ second = false }: { second?: boolean }) {
  const note = "font-['Inter','Open_Sans',sans-serif] text-[10.5px] leading-[14px] text-black relative";
  return (
    <div className={`relative flex h-[768px] w-[684px] flex-col overflow-hidden bg-[#02142e] ${second ? "origin-top-left -translate-y-[1.9px] scale-x-[1.0234] scale-y-[0.9963]" : ""}`}>
      <div className="flex h-[18.5px] shrink-0 items-center border-b border-[#d5d5d5] bg-[#f6f6f6] pl-[4.7px]">
        <span className="mr-[6.3px] h-[11px] w-[11px] rounded-full bg-[#dcdcdc]" />
        <span className="mr-[6.3px] h-[11px] w-[11px] rounded-full bg-[#dcdcdc]" />
        <span className="h-[11px] w-[11px] rounded-full bg-[#dcdcdc]" />
        <Fit className="ml-[231.2px] w-[118.7px] font-['Inter','Open_Sans',sans-serif] text-[11px] leading-[14px] text-[#b2b2b2]">Server 2016 [Running]</Fit>
      </div>
      <div className="relative min-h-0 flex-1 bg-[radial-gradient(ellipse_300px_90px_at_48%_17%,#04254e,transparent),radial-gradient(ellipse_70px_210px_at_0%_45%,#0b4480,transparent),radial-gradient(ellipse_280px_110px_at_62%_90%,#04244a,transparent)]">
        <span className="absolute right-0 top-[180px] h-[400px] w-[3px] bg-[linear-gradient(#02224a,#0a7fe0_15%,#12a6e6_25%,#7cc8e8_40%,#7cc8e8_52%,#09396e_53%,#7cc8e8_55%,#12a6e6_68%,#0a6fd0_80%,#02224a)]" />
        <div className="flex flex-col gap-[2px] pt-[1px]">
          <div className={`h-[44px] ${noteBox}`}>
            <RecycleBin />
            <Fit className={`w-[610.3px] ${note}`}>
              You have the <b>Auto capture keyboard</b> option turned on. This will cause the Virtual Machine to automatically <b>capture</b> the keyboard every
            </Fit>
            <NoteIcons />
          </div>
          <div className={`h-[43.5px] ${noteBox}`}>
            <span className={`absolute left-[2.500px] top-[2px] text-[#dfe4e9] ${segoe}`}><Fit className="w-[51.3px]">Recycle Bin</Fit></span>
            <Fit className={`w-[594.5px] ${note}`}>
              The Virtual Machine reports that the guest OS supports <b>mouse pointer integration</b>. This means that you do not need to <i>capture</i> the
            </Fit>
            <NoteIcons />
          </div>
        </div>
        <div className={`absolute left-[2px] top-[101px] flex w-[60px] flex-col text-white ${segoe}`}>
          <svg className="ml-[5px] h-[42px] w-[42px]" viewBox="-2 0 42 42">
            <circle cx="21" cy="19.500" r="19" fill="#fbc116" />
            <path d="M21 19.500L4.500 10A19 19 0 0 1 37.500 10z" fill="#e33b2e" />
            <path d="M21 .5A19 19 0 0 1 38 11H21z" fill="#e33b2e" />
            <path d="M4.500 10A19 19 0 0 0 20 38.500L28 24z" fill="#16a05a" />
            <circle cx="21" cy="19.500" r="8.800" fill="#fff" /><circle cx="21" cy="19.500" r="7" fill="#4285f4" />
            <rect x=".3" y="29.500" width="11.500" height="11.500" fill="#fff" /><path d="M3 39.500q-.5-5 3-6.500L4.500 31.500H9.500v5L8 35q-3 1-3 4.500z" fill="#1f4f94" />
          </svg>
          <Fit className="ml-[11px] mt-[2px] w-[12.5px] leading-[13.3px]">Go</Fit>
          <Fit className="ml-[9.5px] w-[12.5px] leading-[13.3px]">Ch</Fit>
          <svg className="ml-[8px] mt-[35px] h-[30px] w-[14px]" viewBox="0 0 14 30"><path d="M0 5Q4 2 9 0v4h5v3H0z" fill="#cfd3d6" /><path d="M2 7h8v21H3z" fill="#f2f4f5" stroke="#aab" strokeWidth=".7" /><path d="M4 18h5M4 21h5M4 24h5" stroke="#b5babf" strokeDasharray="1 1" /></svg>
          <Fit className="mt-[2.500px] w-[18.5px]">vcre</Fit>
        </div>
      </div>
      <Taskbar second={second} />
      <StatusBar second={second} />
      <ServerManager />
      <Directory second={second} />
      {second && <Properties />}
      <SelectGroups place={second ? "left-[27.7px] top-[492.4px]" : "left-[158px] top-[280px]"} />
    </div>
  );
}

export default function App() {
  return (
    <main className="flex h-[990px] w-[1711px] flex-col overflow-hidden bg-white font-['Liberation_Sans',Arial,sans-serif] text-black">
      <h1 className="flex h-[132px] shrink-0">
        <Fit className="ml-[537px] mt-[9px] w-[606px] text-[29.3px] leading-[34px]">How to add a user to a group in multiple ways</Fit>
        <Fit className="-ml-[24.5px] mt-[74px] w-[365px] text-[24px] leading-[30px]">Second way to add user to group.</Fit>
      </h1>
      <div className="flex items-start">
        <figure className="ml-[54px] w-[696px]">
          <div className="h-[780px] border-6 border-black shadow-[4px_4px_6px_rgba(0,0,0,0.5)]">
            <Screen />
          </div>
          <figcaption className="-ml-[13px] mt-[13px] text-[24px] leading-[26.3px]">
            <Fit className="w-[669px]">Right click on user go to add group. Type group name click on</Fit>
            <Fit className="w-[301px]">check names and select ok.</Fit>
          </figcaption>
        </figure>
        <figure className="ml-[189px] w-[712px]">
          <div className="h-[775px] overflow-hidden border-6 border-black shadow-[4px_4px_6px_rgba(0,0,0,0.5)]">
            <Screen second />
          </div>
          <figcaption className="ml-[19.5px] mt-[7px] text-[24px] leading-[29px]">
            <Fit className="w-[649px]">Go to user&gt; properties&gt;Member Of&gt;Add&gt; type group name,</Fit>
            <Fit className="w-[298px]">check Names ok and apply.</Fit>
          </figcaption>
        </figure>
      </div>
    </main>
  );
}
